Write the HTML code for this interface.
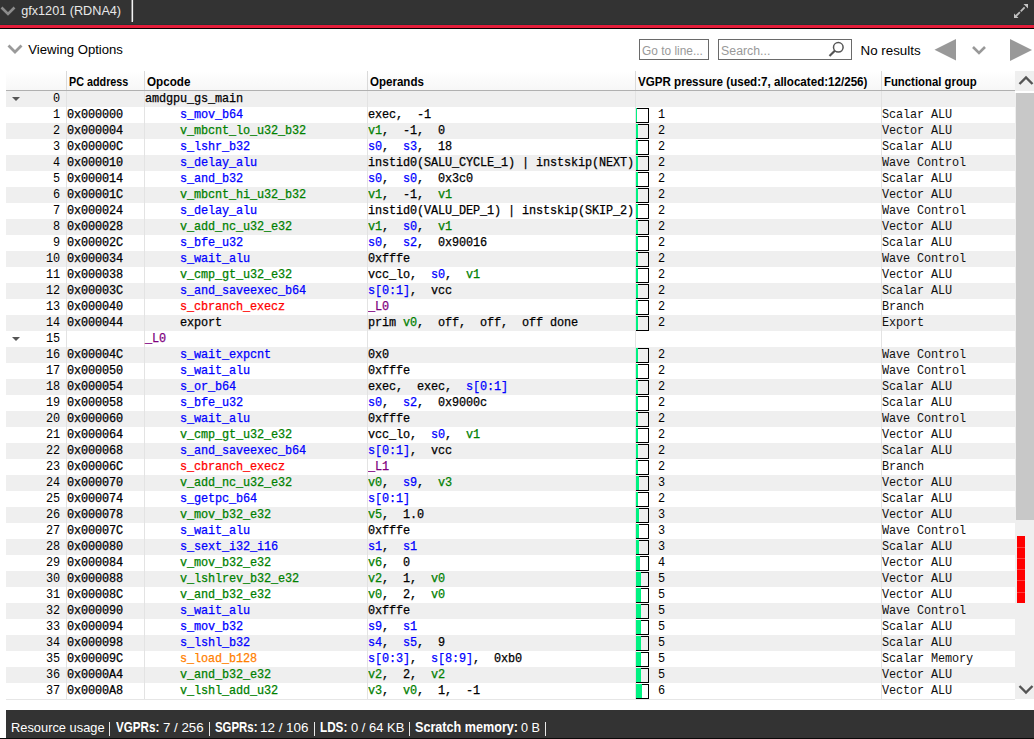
<!DOCTYPE html><html><head><meta charset="utf-8"><style>
*{margin:0;padding:0;box-sizing:border-box}
html,body{width:1034px;height:739px;overflow:hidden;background:#fff}
body{position:relative;font-family:"Liberation Sans",sans-serif}
.a{position:absolute}
.m{font-family:"Liberation Mono",monospace;font-size:11.85px;letter-spacing:-0.11px;line-height:16px;white-space:pre;color:#000;-webkit-text-stroke:0.25px currentColor}
.row{position:absolute;left:6px;width:1009px;height:16px}
.g{background:#efefef}
.vd{position:absolute;width:1px;background:#e3e3e3}
.hd{position:absolute;font-weight:bold;font-size:11.5px;color:#000;white-space:pre;line-height:14px}
.box{position:absolute;width:13px;height:15px;border:1px solid #000}
.gr{position:absolute;background:#00f282}
.t{white-space:pre}
.ns{-webkit-text-stroke:0}
</style></head><body>
<div class="a" style="left:0;top:0;width:1034px;height:25px;background:#333333"></div>
<div class="a" style="left:0;top:24px;width:1034px;height:1px;background:#263231"></div>
<div class="a" style="left:0;top:25px;width:1034px;height:3px;background:#e31d3a"></div>
<div class="a" style="left:0;top:28px;width:1034px;height:1px;background:#000"></div>
<svg class="a" style="left:0;top:0" width="20" height="24"><polyline points="1.5,7.5 8,14 14.5,7.5" fill="none" stroke="#8c8c8c" stroke-width="2.6"/></svg>
<div class="a t" style="left:21.2px;top:4px;font-size:12.66px;line-height:15px;color:#e8e8e8">gfx1201 (RDNA4)</div>
<div class="a" style="left:131px;top:0px;width:1px;height:22px;background:#8a8a8a"></div>
<div class="a" style="left:132px;top:0px;width:1px;height:22px;background:#f4f4f4"></div>
<div class="a" style="left:133px;top:0px;width:1px;height:21px;background:#4a4a4a"></div>
<svg class="a" style="left:1010px;top:0" width="24" height="24"><line x1="6" y1="16" x2="16.5" y2="5.5" stroke="#bdbdbd" stroke-width="1.8" stroke-dasharray="5.5 1.2 5.5"/><polygon points="13.5,4 18,4 18,8.5" fill="#c4c4c4"/><polygon points="4,13.5 4,18 8.5,18" fill="#c4c4c4"/></svg>
<svg class="a" style="left:0;top:38px" width="26" height="20"><polyline points="8.5,7.5 15,14 21.5,7.5" fill="none" stroke="#9a9a9a" stroke-width="2.8"/></svg>
<div class="a t" style="left:28.3px;top:42px;font-size:13.14px;line-height:15px;color:#000">Viewing Options</div>
<div class="a" style="left:639px;top:39px;width:70px;height:21px;border:1px solid #6a6a6a"></div>
<div class="a t" style="left:642px;top:44px;font-size:11.9px;line-height:15px;color:#999">Go to line...</div>
<div class="a" style="left:718px;top:39px;width:134px;height:21px;border:1px solid #6a6a6a"></div>
<div class="a t" style="left:721.1px;top:44px;font-size:12.3px;line-height:15px;color:#999">Search...</div>
<svg class="a" style="left:826px;top:40px" width="20" height="20"><circle cx="12.3" cy="7.3" r="4.8" fill="none" stroke="#555" stroke-width="1.5"/><line x1="3.5" y1="16" x2="8.8" y2="10.8" stroke="#555" stroke-width="2.2"/></svg>
<div class="a t" style="left:860.5px;top:43px;font-size:13.37px;line-height:15px;color:#000">No results</div>
<svg class="a" style="left:930px;top:36px" width="104" height="28"><polygon points="4.5,13.8 26,3 26,24.6" fill="#999"/><polyline points="43,11 49,17 55,11" fill="none" stroke="#999" stroke-width="2.6"/><polygon points="80,3 80,25 102,14" fill="#999"/></svg>
<div class="a" style="left:6px;top:71px;width:1009px;height:19px;background:linear-gradient(#ffffff 0px,#fefefe 2px,#f7f7f7 100%)"></div>
<div class="a" style="left:6px;top:90px;width:1009px;height:1px;background:#b0b0b0"></div>
<div class="vd" style="left:66px;top:71px;height:19px;background:#dadada"></div>
<div class="vd" style="left:144px;top:71px;height:19px;background:#dadada"></div>
<div class="vd" style="left:367px;top:71px;height:19px;background:#dadada"></div>
<div class="vd" style="left:635px;top:71px;height:19px;background:#dadada"></div>
<div class="vd" style="left:881px;top:71px;height:19px;background:#dadada"></div>
<div class="a t" style="left:68.95px;top:71.63px;font-size:12.6px;font-weight:bold;line-height:20px;color:#000;transform:scaleX(0.8559);transform-origin:0 0;">PC address</div>
<div class="a t" style="left:146.53px;top:71.63px;font-size:12.6px;font-weight:bold;line-height:20px;color:#000;transform:scaleX(0.9268);transform-origin:0 0;">Opcode</div>
<div class="a t" style="left:369.74px;top:71.63px;font-size:12.6px;font-weight:bold;line-height:20px;color:#000;transform:scaleX(0.9161);transform-origin:0 0;">Operands</div>
<div class="a t" style="left:637.90px;top:71.63px;font-size:12.6px;font-weight:bold;line-height:20px;color:#000;transform:scaleX(0.9206);transform-origin:0 0;">VGPR pressure (used:7, allocated:12/256)</div>
<div class="a t" style="left:884.02px;top:71.63px;font-size:12.6px;font-weight:bold;line-height:20px;color:#000;transform:scaleX(0.9014);transform-origin:0 0;">Functional group</div>
<div class="row g" style="top:91px"></div>
<div class="row" style="top:107px"></div>
<div class="row g" style="top:123px"></div>
<div class="row" style="top:139px"></div>
<div class="row g" style="top:155px"></div>
<div class="row" style="top:171px"></div>
<div class="row g" style="top:187px"></div>
<div class="row" style="top:203px"></div>
<div class="row g" style="top:219px"></div>
<div class="row" style="top:235px"></div>
<div class="row g" style="top:251px"></div>
<div class="row" style="top:267px"></div>
<div class="row g" style="top:283px"></div>
<div class="row" style="top:299px"></div>
<div class="row g" style="top:315px"></div>
<div class="row" style="top:331px"></div>
<div class="row g" style="top:347px"></div>
<div class="row" style="top:363px"></div>
<div class="row g" style="top:379px"></div>
<div class="row" style="top:395px"></div>
<div class="row g" style="top:411px"></div>
<div class="row" style="top:427px"></div>
<div class="row g" style="top:443px"></div>
<div class="row" style="top:459px"></div>
<div class="row g" style="top:475px"></div>
<div class="row" style="top:491px"></div>
<div class="row g" style="top:507px"></div>
<div class="row" style="top:523px"></div>
<div class="row g" style="top:539px"></div>
<div class="row" style="top:555px"></div>
<div class="row g" style="top:571px"></div>
<div class="row" style="top:587px"></div>
<div class="row g" style="top:603px"></div>
<div class="row" style="top:619px"></div>
<div class="row g" style="top:635px"></div>
<div class="row" style="top:651px"></div>
<div class="row g" style="top:667px"></div>
<div class="row" style="top:683px"></div>
<div class="vd" style="left:66px;top:91px;height:608px"></div>
<div class="vd" style="left:144px;top:91px;height:608px"></div>
<div class="vd" style="left:367px;top:91px;height:608px"></div>
<div class="vd" style="left:635px;top:91px;height:608px"></div>
<div class="vd" style="left:881px;top:91px;height:608px"></div>
<div class="a" style="left:6px;top:699px;width:1009px;height:1px;background:#e6e6e6"></div>
<svg class="a" style="left:12px;top:97px" width="9" height="5"><polygon points="0,0 8,0 4,4" fill="#555"/></svg>
<div class="a m ns" style="left:20px;top:91px;width:40px;text-align:right">0</div>
<div class="a m" style="left:145px;top:91px;color:#000000">amdgpu_gs_main</div>
<div class="a m ns" style="left:20px;top:107px;width:40px;text-align:right">1</div>
<div class="a m" style="left:67px;top:107px">0x000000</div>
<div class="a m" style="left:180px;top:107px;color:#0000ff">s_mov_b64</div>
<div class="a m" style="left:368px;top:107px;width:267px;overflow:hidden">exec<span>,  </span>-1</div>
<div class="box" style="left:636px;top:108px"></div>
<div class="gr" style="left:636px;top:108px;width:1px;height:14px"></div>
<div class="a m ns" style="left:658px;top:107px">1</div>
<div class="a m ns" style="left:882px;top:107px;color:#111">Scalar ALU</div>
<div class="a m ns" style="left:20px;top:123px;width:40px;text-align:right">2</div>
<div class="a m" style="left:67px;top:123px">0x000004</div>
<div class="a m" style="left:180px;top:123px;color:#008000">v_mbcnt_lo_u32_b32</div>
<div class="a m" style="left:368px;top:123px;width:267px;overflow:hidden"><span style="color:#008000">v1</span><span>,  </span>-1<span>,  </span>0</div>
<div class="box" style="left:636px;top:124px"></div>
<div class="gr" style="left:636px;top:124px;width:2px;height:14px"></div>
<div class="a m ns" style="left:658px;top:123px">2</div>
<div class="a m ns" style="left:882px;top:123px;color:#111">Vector ALU</div>
<div class="a m ns" style="left:20px;top:139px;width:40px;text-align:right">3</div>
<div class="a m" style="left:67px;top:139px">0x00000C</div>
<div class="a m" style="left:180px;top:139px;color:#0000ff">s_lshr_b32</div>
<div class="a m" style="left:368px;top:139px;width:267px;overflow:hidden"><span style="color:#0000ff">s0</span><span>,  </span><span style="color:#0000ff">s3</span><span>,  </span>18</div>
<div class="box" style="left:636px;top:140px"></div>
<div class="gr" style="left:636px;top:140px;width:2px;height:14px"></div>
<div class="a m ns" style="left:658px;top:139px">2</div>
<div class="a m ns" style="left:882px;top:139px;color:#111">Scalar ALU</div>
<div class="a m ns" style="left:20px;top:155px;width:40px;text-align:right">4</div>
<div class="a m" style="left:67px;top:155px">0x000010</div>
<div class="a m" style="left:180px;top:155px;color:#0000ff">s_delay_alu</div>
<div class="a m" style="left:368px;top:155px;width:267px;overflow:hidden">instid0(SALU_CYCLE_1) | instskip(NEXT)</div>
<div class="box" style="left:636px;top:156px"></div>
<div class="gr" style="left:636px;top:156px;width:2px;height:14px"></div>
<div class="a m ns" style="left:658px;top:155px">2</div>
<div class="a m ns" style="left:882px;top:155px;color:#111">Wave Control</div>
<div class="a m ns" style="left:20px;top:171px;width:40px;text-align:right">5</div>
<div class="a m" style="left:67px;top:171px">0x000014</div>
<div class="a m" style="left:180px;top:171px;color:#0000ff">s_and_b32</div>
<div class="a m" style="left:368px;top:171px;width:267px;overflow:hidden"><span style="color:#0000ff">s0</span><span>,  </span><span style="color:#0000ff">s0</span><span>,  </span>0x3c0</div>
<div class="box" style="left:636px;top:172px"></div>
<div class="gr" style="left:636px;top:172px;width:2px;height:14px"></div>
<div class="a m ns" style="left:658px;top:171px">2</div>
<div class="a m ns" style="left:882px;top:171px;color:#111">Scalar ALU</div>
<div class="a m ns" style="left:20px;top:187px;width:40px;text-align:right">6</div>
<div class="a m" style="left:67px;top:187px">0x00001C</div>
<div class="a m" style="left:180px;top:187px;color:#008000">v_mbcnt_hi_u32_b32</div>
<div class="a m" style="left:368px;top:187px;width:267px;overflow:hidden"><span style="color:#008000">v1</span><span>,  </span>-1<span>,  </span><span style="color:#008000">v1</span></div>
<div class="box" style="left:636px;top:188px"></div>
<div class="gr" style="left:636px;top:188px;width:2px;height:14px"></div>
<div class="a m ns" style="left:658px;top:187px">2</div>
<div class="a m ns" style="left:882px;top:187px;color:#111">Vector ALU</div>
<div class="a m ns" style="left:20px;top:203px;width:40px;text-align:right">7</div>
<div class="a m" style="left:67px;top:203px">0x000024</div>
<div class="a m" style="left:180px;top:203px;color:#0000ff">s_delay_alu</div>
<div class="a m" style="left:368px;top:203px;width:267px;overflow:hidden">instid0(VALU_DEP_1) | instskip(SKIP_2)</div>
<div class="box" style="left:636px;top:204px"></div>
<div class="gr" style="left:636px;top:204px;width:2px;height:14px"></div>
<div class="a m ns" style="left:658px;top:203px">2</div>
<div class="a m ns" style="left:882px;top:203px;color:#111">Wave Control</div>
<div class="a m ns" style="left:20px;top:219px;width:40px;text-align:right">8</div>
<div class="a m" style="left:67px;top:219px">0x000028</div>
<div class="a m" style="left:180px;top:219px;color:#008000">v_add_nc_u32_e32</div>
<div class="a m" style="left:368px;top:219px;width:267px;overflow:hidden"><span style="color:#008000">v1</span><span>,  </span><span style="color:#0000ff">s0</span><span>,  </span><span style="color:#008000">v1</span></div>
<div class="box" style="left:636px;top:220px"></div>
<div class="gr" style="left:636px;top:220px;width:2px;height:14px"></div>
<div class="a m ns" style="left:658px;top:219px">2</div>
<div class="a m ns" style="left:882px;top:219px;color:#111">Vector ALU</div>
<div class="a m ns" style="left:20px;top:235px;width:40px;text-align:right">9</div>
<div class="a m" style="left:67px;top:235px">0x00002C</div>
<div class="a m" style="left:180px;top:235px;color:#0000ff">s_bfe_u32</div>
<div class="a m" style="left:368px;top:235px;width:267px;overflow:hidden"><span style="color:#0000ff">s0</span><span>,  </span><span style="color:#0000ff">s2</span><span>,  </span>0x90016</div>
<div class="box" style="left:636px;top:236px"></div>
<div class="gr" style="left:636px;top:236px;width:2px;height:14px"></div>
<div class="a m ns" style="left:658px;top:235px">2</div>
<div class="a m ns" style="left:882px;top:235px;color:#111">Scalar ALU</div>
<div class="a m ns" style="left:20px;top:251px;width:40px;text-align:right">10</div>
<div class="a m" style="left:67px;top:251px">0x000034</div>
<div class="a m" style="left:180px;top:251px;color:#0000ff">s_wait_alu</div>
<div class="a m" style="left:368px;top:251px;width:267px;overflow:hidden">0xfffe</div>
<div class="box" style="left:636px;top:252px"></div>
<div class="gr" style="left:636px;top:252px;width:2px;height:14px"></div>
<div class="a m ns" style="left:658px;top:251px">2</div>
<div class="a m ns" style="left:882px;top:251px;color:#111">Wave Control</div>
<div class="a m ns" style="left:20px;top:267px;width:40px;text-align:right">11</div>
<div class="a m" style="left:67px;top:267px">0x000038</div>
<div class="a m" style="left:180px;top:267px;color:#008000">v_cmp_gt_u32_e32</div>
<div class="a m" style="left:368px;top:267px;width:267px;overflow:hidden">vcc_lo<span>,  </span><span style="color:#0000ff">s0</span><span>,  </span><span style="color:#008000">v1</span></div>
<div class="box" style="left:636px;top:268px"></div>
<div class="gr" style="left:636px;top:268px;width:2px;height:14px"></div>
<div class="a m ns" style="left:658px;top:267px">2</div>
<div class="a m ns" style="left:882px;top:267px;color:#111">Vector ALU</div>
<div class="a m ns" style="left:20px;top:283px;width:40px;text-align:right">12</div>
<div class="a m" style="left:67px;top:283px">0x00003C</div>
<div class="a m" style="left:180px;top:283px;color:#0000ff">s_and_saveexec_b64</div>
<div class="a m" style="left:368px;top:283px;width:267px;overflow:hidden"><span style="color:#0000ff">s[0:1]</span><span>,  </span>vcc</div>
<div class="box" style="left:636px;top:284px"></div>
<div class="gr" style="left:636px;top:284px;width:2px;height:14px"></div>
<div class="a m ns" style="left:658px;top:283px">2</div>
<div class="a m ns" style="left:882px;top:283px;color:#111">Scalar ALU</div>
<div class="a m ns" style="left:20px;top:299px;width:40px;text-align:right">13</div>
<div class="a m" style="left:67px;top:299px">0x000040</div>
<div class="a m" style="left:180px;top:299px;color:#ff0000">s_cbranch_execz</div>
<div class="a m" style="left:368px;top:299px;width:267px;overflow:hidden"><span style="color:#800080">_L0</span></div>
<div class="box" style="left:636px;top:300px"></div>
<div class="gr" style="left:636px;top:300px;width:2px;height:14px"></div>
<div class="a m ns" style="left:658px;top:299px">2</div>
<div class="a m ns" style="left:882px;top:299px;color:#111">Branch</div>
<div class="a m ns" style="left:20px;top:315px;width:40px;text-align:right">14</div>
<div class="a m" style="left:67px;top:315px">0x000044</div>
<div class="a m" style="left:180px;top:315px;color:#000000">export</div>
<div class="a m" style="left:368px;top:315px;width:267px;overflow:hidden">prim <span style="color:#008000">v0</span>,  off,  off,  off done</div>
<div class="box" style="left:636px;top:316px"></div>
<div class="gr" style="left:636px;top:316px;width:2px;height:14px"></div>
<div class="a m ns" style="left:658px;top:315px">2</div>
<div class="a m ns" style="left:882px;top:315px;color:#111">Export</div>
<svg class="a" style="left:12px;top:337px" width="9" height="5"><polygon points="0,0 8,0 4,4" fill="#555"/></svg>
<div class="a m ns" style="left:20px;top:331px;width:40px;text-align:right">15</div>
<div class="a m" style="left:145px;top:331px;color:#800080">_L0</div>
<div class="a m ns" style="left:20px;top:347px;width:40px;text-align:right">16</div>
<div class="a m" style="left:67px;top:347px">0x00004C</div>
<div class="a m" style="left:180px;top:347px;color:#0000ff">s_wait_expcnt</div>
<div class="a m" style="left:368px;top:347px;width:267px;overflow:hidden">0x0</div>
<div class="box" style="left:636px;top:348px"></div>
<div class="gr" style="left:636px;top:348px;width:2px;height:14px"></div>
<div class="a m ns" style="left:658px;top:347px">2</div>
<div class="a m ns" style="left:882px;top:347px;color:#111">Wave Control</div>
<div class="a m ns" style="left:20px;top:363px;width:40px;text-align:right">17</div>
<div class="a m" style="left:67px;top:363px">0x000050</div>
<div class="a m" style="left:180px;top:363px;color:#0000ff">s_wait_alu</div>
<div class="a m" style="left:368px;top:363px;width:267px;overflow:hidden">0xfffe</div>
<div class="box" style="left:636px;top:364px"></div>
<div class="gr" style="left:636px;top:364px;width:2px;height:14px"></div>
<div class="a m ns" style="left:658px;top:363px">2</div>
<div class="a m ns" style="left:882px;top:363px;color:#111">Wave Control</div>
<div class="a m ns" style="left:20px;top:379px;width:40px;text-align:right">18</div>
<div class="a m" style="left:67px;top:379px">0x000054</div>
<div class="a m" style="left:180px;top:379px;color:#0000ff">s_or_b64</div>
<div class="a m" style="left:368px;top:379px;width:267px;overflow:hidden">exec<span>,  </span>exec<span>,  </span><span style="color:#0000ff">s[0:1]</span></div>
<div class="box" style="left:636px;top:380px"></div>
<div class="gr" style="left:636px;top:380px;width:2px;height:14px"></div>
<div class="a m ns" style="left:658px;top:379px">2</div>
<div class="a m ns" style="left:882px;top:379px;color:#111">Scalar ALU</div>
<div class="a m ns" style="left:20px;top:395px;width:40px;text-align:right">19</div>
<div class="a m" style="left:67px;top:395px">0x000058</div>
<div class="a m" style="left:180px;top:395px;color:#0000ff">s_bfe_u32</div>
<div class="a m" style="left:368px;top:395px;width:267px;overflow:hidden"><span style="color:#0000ff">s0</span><span>,  </span><span style="color:#0000ff">s2</span><span>,  </span>0x9000c</div>
<div class="box" style="left:636px;top:396px"></div>
<div class="gr" style="left:636px;top:396px;width:2px;height:14px"></div>
<div class="a m ns" style="left:658px;top:395px">2</div>
<div class="a m ns" style="left:882px;top:395px;color:#111">Scalar ALU</div>
<div class="a m ns" style="left:20px;top:411px;width:40px;text-align:right">20</div>
<div class="a m" style="left:67px;top:411px">0x000060</div>
<div class="a m" style="left:180px;top:411px;color:#0000ff">s_wait_alu</div>
<div class="a m" style="left:368px;top:411px;width:267px;overflow:hidden">0xfffe</div>
<div class="box" style="left:636px;top:412px"></div>
<div class="gr" style="left:636px;top:412px;width:2px;height:14px"></div>
<div class="a m ns" style="left:658px;top:411px">2</div>
<div class="a m ns" style="left:882px;top:411px;color:#111">Wave Control</div>
<div class="a m ns" style="left:20px;top:427px;width:40px;text-align:right">21</div>
<div class="a m" style="left:67px;top:427px">0x000064</div>
<div class="a m" style="left:180px;top:427px;color:#008000">v_cmp_gt_u32_e32</div>
<div class="a m" style="left:368px;top:427px;width:267px;overflow:hidden">vcc_lo<span>,  </span><span style="color:#0000ff">s0</span><span>,  </span><span style="color:#008000">v1</span></div>
<div class="box" style="left:636px;top:428px"></div>
<div class="gr" style="left:636px;top:428px;width:2px;height:14px"></div>
<div class="a m ns" style="left:658px;top:427px">2</div>
<div class="a m ns" style="left:882px;top:427px;color:#111">Vector ALU</div>
<div class="a m ns" style="left:20px;top:443px;width:40px;text-align:right">22</div>
<div class="a m" style="left:67px;top:443px">0x000068</div>
<div class="a m" style="left:180px;top:443px;color:#0000ff">s_and_saveexec_b64</div>
<div class="a m" style="left:368px;top:443px;width:267px;overflow:hidden"><span style="color:#0000ff">s[0:1]</span><span>,  </span>vcc</div>
<div class="box" style="left:636px;top:444px"></div>
<div class="gr" style="left:636px;top:444px;width:2px;height:14px"></div>
<div class="a m ns" style="left:658px;top:443px">2</div>
<div class="a m ns" style="left:882px;top:443px;color:#111">Scalar ALU</div>
<div class="a m ns" style="left:20px;top:459px;width:40px;text-align:right">23</div>
<div class="a m" style="left:67px;top:459px">0x00006C</div>
<div class="a m" style="left:180px;top:459px;color:#ff0000">s_cbranch_execz</div>
<div class="a m" style="left:368px;top:459px;width:267px;overflow:hidden"><span style="color:#800080">_L1</span></div>
<div class="box" style="left:636px;top:460px"></div>
<div class="gr" style="left:636px;top:460px;width:2px;height:14px"></div>
<div class="a m ns" style="left:658px;top:459px">2</div>
<div class="a m ns" style="left:882px;top:459px;color:#111">Branch</div>
<div class="a m ns" style="left:20px;top:475px;width:40px;text-align:right">24</div>
<div class="a m" style="left:67px;top:475px">0x000070</div>
<div class="a m" style="left:180px;top:475px;color:#008000">v_add_nc_u32_e32</div>
<div class="a m" style="left:368px;top:475px;width:267px;overflow:hidden"><span style="color:#008000">v0</span><span>,  </span><span style="color:#0000ff">s9</span><span>,  </span><span style="color:#008000">v3</span></div>
<div class="box" style="left:636px;top:476px"></div>
<div class="gr" style="left:636px;top:476px;width:3px;height:14px"></div>
<div class="a m ns" style="left:658px;top:475px">3</div>
<div class="a m ns" style="left:882px;top:475px;color:#111">Vector ALU</div>
<div class="a m ns" style="left:20px;top:491px;width:40px;text-align:right">25</div>
<div class="a m" style="left:67px;top:491px">0x000074</div>
<div class="a m" style="left:180px;top:491px;color:#0000ff">s_getpc_b64</div>
<div class="a m" style="left:368px;top:491px;width:267px;overflow:hidden"><span style="color:#0000ff">s[0:1]</span></div>
<div class="box" style="left:636px;top:492px"></div>
<div class="gr" style="left:636px;top:492px;width:2px;height:14px"></div>
<div class="a m ns" style="left:658px;top:491px">2</div>
<div class="a m ns" style="left:882px;top:491px;color:#111">Scalar ALU</div>
<div class="a m ns" style="left:20px;top:507px;width:40px;text-align:right">26</div>
<div class="a m" style="left:67px;top:507px">0x000078</div>
<div class="a m" style="left:180px;top:507px;color:#008000">v_mov_b32_e32</div>
<div class="a m" style="left:368px;top:507px;width:267px;overflow:hidden"><span style="color:#008000">v5</span><span>,  </span>1.0</div>
<div class="box" style="left:636px;top:508px"></div>
<div class="gr" style="left:636px;top:508px;width:3px;height:14px"></div>
<div class="a m ns" style="left:658px;top:507px">3</div>
<div class="a m ns" style="left:882px;top:507px;color:#111">Vector ALU</div>
<div class="a m ns" style="left:20px;top:523px;width:40px;text-align:right">27</div>
<div class="a m" style="left:67px;top:523px">0x00007C</div>
<div class="a m" style="left:180px;top:523px;color:#0000ff">s_wait_alu</div>
<div class="a m" style="left:368px;top:523px;width:267px;overflow:hidden">0xfffe</div>
<div class="box" style="left:636px;top:524px"></div>
<div class="gr" style="left:636px;top:524px;width:3px;height:14px"></div>
<div class="a m ns" style="left:658px;top:523px">3</div>
<div class="a m ns" style="left:882px;top:523px;color:#111">Wave Control</div>
<div class="a m ns" style="left:20px;top:539px;width:40px;text-align:right">28</div>
<div class="a m" style="left:67px;top:539px">0x000080</div>
<div class="a m" style="left:180px;top:539px;color:#0000ff">s_sext_i32_i16</div>
<div class="a m" style="left:368px;top:539px;width:267px;overflow:hidden"><span style="color:#0000ff">s1</span><span>,  </span><span style="color:#0000ff">s1</span></div>
<div class="box" style="left:636px;top:540px"></div>
<div class="gr" style="left:636px;top:540px;width:3px;height:14px"></div>
<div class="a m ns" style="left:658px;top:539px">3</div>
<div class="a m ns" style="left:882px;top:539px;color:#111">Scalar ALU</div>
<div class="a m ns" style="left:20px;top:555px;width:40px;text-align:right">29</div>
<div class="a m" style="left:67px;top:555px">0x000084</div>
<div class="a m" style="left:180px;top:555px;color:#008000">v_mov_b32_e32</div>
<div class="a m" style="left:368px;top:555px;width:267px;overflow:hidden"><span style="color:#008000">v6</span><span>,  </span>0</div>
<div class="box" style="left:636px;top:556px"></div>
<div class="gr" style="left:636px;top:556px;width:4px;height:14px"></div>
<div class="a m ns" style="left:658px;top:555px">4</div>
<div class="a m ns" style="left:882px;top:555px;color:#111">Vector ALU</div>
<div class="a m ns" style="left:20px;top:571px;width:40px;text-align:right">30</div>
<div class="a m" style="left:67px;top:571px">0x000088</div>
<div class="a m" style="left:180px;top:571px;color:#008000">v_lshlrev_b32_e32</div>
<div class="a m" style="left:368px;top:571px;width:267px;overflow:hidden"><span style="color:#008000">v2</span><span>,  </span>1<span>,  </span><span style="color:#008000">v0</span></div>
<div class="box" style="left:636px;top:572px"></div>
<div class="gr" style="left:636px;top:572px;width:5px;height:14px"></div>
<div class="a m ns" style="left:658px;top:571px">5</div>
<div class="a m ns" style="left:882px;top:571px;color:#111">Vector ALU</div>
<div class="a m ns" style="left:20px;top:587px;width:40px;text-align:right">31</div>
<div class="a m" style="left:67px;top:587px">0x00008C</div>
<div class="a m" style="left:180px;top:587px;color:#008000">v_and_b32_e32</div>
<div class="a m" style="left:368px;top:587px;width:267px;overflow:hidden"><span style="color:#008000">v0</span><span>,  </span>2<span>,  </span><span style="color:#008000">v0</span></div>
<div class="box" style="left:636px;top:588px"></div>
<div class="gr" style="left:636px;top:588px;width:5px;height:14px"></div>
<div class="a m ns" style="left:658px;top:587px">5</div>
<div class="a m ns" style="left:882px;top:587px;color:#111">Vector ALU</div>
<div class="a m ns" style="left:20px;top:603px;width:40px;text-align:right">32</div>
<div class="a m" style="left:67px;top:603px">0x000090</div>
<div class="a m" style="left:180px;top:603px;color:#0000ff">s_wait_alu</div>
<div class="a m" style="left:368px;top:603px;width:267px;overflow:hidden">0xfffe</div>
<div class="box" style="left:636px;top:604px"></div>
<div class="gr" style="left:636px;top:604px;width:5px;height:14px"></div>
<div class="a m ns" style="left:658px;top:603px">5</div>
<div class="a m ns" style="left:882px;top:603px;color:#111">Wave Control</div>
<div class="a m ns" style="left:20px;top:619px;width:40px;text-align:right">33</div>
<div class="a m" style="left:67px;top:619px">0x000094</div>
<div class="a m" style="left:180px;top:619px;color:#0000ff">s_mov_b32</div>
<div class="a m" style="left:368px;top:619px;width:267px;overflow:hidden"><span style="color:#0000ff">s9</span><span>,  </span><span style="color:#0000ff">s1</span></div>
<div class="box" style="left:636px;top:620px"></div>
<div class="gr" style="left:636px;top:620px;width:5px;height:14px"></div>
<div class="a m ns" style="left:658px;top:619px">5</div>
<div class="a m ns" style="left:882px;top:619px;color:#111">Scalar ALU</div>
<div class="a m ns" style="left:20px;top:635px;width:40px;text-align:right">34</div>
<div class="a m" style="left:67px;top:635px">0x000098</div>
<div class="a m" style="left:180px;top:635px;color:#0000ff">s_lshl_b32</div>
<div class="a m" style="left:368px;top:635px;width:267px;overflow:hidden"><span style="color:#0000ff">s4</span><span>,  </span><span style="color:#0000ff">s5</span><span>,  </span>9</div>
<div class="box" style="left:636px;top:636px"></div>
<div class="gr" style="left:636px;top:636px;width:5px;height:14px"></div>
<div class="a m ns" style="left:658px;top:635px">5</div>
<div class="a m ns" style="left:882px;top:635px;color:#111">Scalar ALU</div>
<div class="a m ns" style="left:20px;top:651px;width:40px;text-align:right">35</div>
<div class="a m" style="left:67px;top:651px">0x00009C</div>
<div class="a m" style="left:180px;top:651px;color:#ff8000">s_load_b128</div>
<div class="a m" style="left:368px;top:651px;width:267px;overflow:hidden"><span style="color:#0000ff">s[0:3]</span><span>,  </span><span style="color:#0000ff">s[8:9]</span><span>,  </span>0xb0</div>
<div class="box" style="left:636px;top:652px"></div>
<div class="gr" style="left:636px;top:652px;width:5px;height:14px"></div>
<div class="a m ns" style="left:658px;top:651px">5</div>
<div class="a m ns" style="left:882px;top:651px;color:#111">Scalar Memory</div>
<div class="a m ns" style="left:20px;top:667px;width:40px;text-align:right">36</div>
<div class="a m" style="left:67px;top:667px">0x0000A4</div>
<div class="a m" style="left:180px;top:667px;color:#008000">v_and_b32_e32</div>
<div class="a m" style="left:368px;top:667px;width:267px;overflow:hidden"><span style="color:#008000">v2</span><span>,  </span>2<span>,  </span><span style="color:#008000">v2</span></div>
<div class="box" style="left:636px;top:668px"></div>
<div class="gr" style="left:636px;top:668px;width:5px;height:14px"></div>
<div class="a m ns" style="left:658px;top:667px">5</div>
<div class="a m ns" style="left:882px;top:667px;color:#111">Vector ALU</div>
<div class="a m ns" style="left:20px;top:683px;width:40px;text-align:right">37</div>
<div class="a m" style="left:67px;top:683px">0x0000A8</div>
<div class="a m" style="left:180px;top:683px;color:#008000">v_lshl_add_u32</div>
<div class="a m" style="left:368px;top:683px;width:267px;overflow:hidden"><span style="color:#008000">v3</span><span>,  </span><span style="color:#008000">v0</span><span>,  </span>1<span>,  </span>-1</div>
<div class="box" style="left:636px;top:684px"></div>
<div class="gr" style="left:636px;top:684px;width:6px;height:14px"></div>
<div class="a m ns" style="left:658px;top:683px">6</div>
<div class="a m ns" style="left:882px;top:683px;color:#111">Vector ALU</div>
<div class="a" style="left:1015px;top:71px;width:19px;height:628px;background:#efefef"></div>
<div class="a" style="left:1015px;top:91px;width:19px;height:2px;background:#fff"></div>
<div class="a" style="left:1016px;top:93px;width:18px;height:427px;background:#c8c8c8"></div>
<svg class="a" style="left:1015px;top:71px" width="19" height="20"><polyline points="4.5,13 11,6.5 17.5,13" fill="none" stroke="#555" stroke-width="2.4"/></svg>
<svg class="a" style="left:1015px;top:679px" width="19" height="20"><polyline points="4.5,7 11,13.5 17.5,7" fill="none" stroke="#555" stroke-width="2.4"/></svg>
<div class="a" style="left:1017px;top:536px;width:8px;height:67px;background:#ff0000"></div>
<div class="a" style="left:1017px;top:547px;width:8px;height:1px;background:#ff3c3c"></div>
<div class="a" style="left:1017px;top:558px;width:8px;height:1px;background:#ff3c3c"></div>
<div class="a" style="left:1017px;top:569px;width:8px;height:1px;background:#ff3c3c"></div>
<div class="a" style="left:1017px;top:580px;width:8px;height:1px;background:#ff3c3c"></div>
<div class="a" style="left:1017px;top:592px;width:8px;height:1px;background:#ff3c3c"></div>
<div class="a" style="left:6px;top:710px;width:1028px;height:29px;background:#333333"></div>
<div class="a" style="left:0;top:738px;width:1034px;height:1px;background:#0a0a0a"></div>
<div class="a t" style="left:11.17px;top:717.56px;font-size:12.8px;font-weight:normal;line-height:20px;color:#fff;transform:scaleX(1.0041);transform-origin:0 0;">Resource usage</div>
<div class="a t" style="left:116.40px;top:716.98px;font-size:13.9px;font-weight:bold;line-height:20px;color:#fff;transform:scaleX(0.8383);transform-origin:0 0;">VGPRs:</div>
<div class="a t" style="left:163.24px;top:717.56px;font-size:12.8px;font-weight:normal;line-height:20px;color:#fff;transform:scaleX(1.0384);transform-origin:0 0;">7 / 256</div>
<div class="a t" style="left:214.77px;top:716.98px;font-size:13.9px;font-weight:bold;line-height:20px;color:#fff;transform:scaleX(0.8210);transform-origin:0 0;">SGPRs:</div>
<div class="a t" style="left:260.46px;top:717.56px;font-size:12.8px;font-weight:normal;line-height:20px;color:#fff;transform:scaleX(1.0489);transform-origin:0 0;">12 / 106</div>
<div class="a t" style="left:320.20px;top:716.98px;font-size:13.9px;font-weight:bold;line-height:20px;color:#fff;transform:scaleX(0.8415);transform-origin:0 0;">LDS:</div>
<div class="a t" style="left:350.61px;top:717.56px;font-size:12.8px;font-weight:normal;line-height:20px;color:#fff;transform:scaleX(1.0122);transform-origin:0 0;">0 / 64 KB</div>
<div class="a t" style="left:415.25px;top:716.98px;font-size:13.9px;font-weight:bold;line-height:20px;color:#fff;transform:scaleX(0.9081);transform-origin:0 0;">Scratch memory:</div>
<div class="a t" style="left:521.42px;top:717.56px;font-size:12.8px;font-weight:normal;line-height:20px;color:#fff;transform:scaleX(0.9875);transform-origin:0 0;">0 B</div>
<div class="a" style="left:109px;top:722px;width:1px;height:14px;background:#e8e8e8"></div>
<div class="a" style="left:209px;top:722px;width:1px;height:14px;background:#e8e8e8"></div>
<div class="a" style="left:314px;top:722px;width:1px;height:14px;background:#e8e8e8"></div>
<div class="a" style="left:409px;top:722px;width:1px;height:14px;background:#e8e8e8"></div>
<div class="a" style="left:545px;top:722px;width:1px;height:14px;background:#e8e8e8"></div>
</body></html>
